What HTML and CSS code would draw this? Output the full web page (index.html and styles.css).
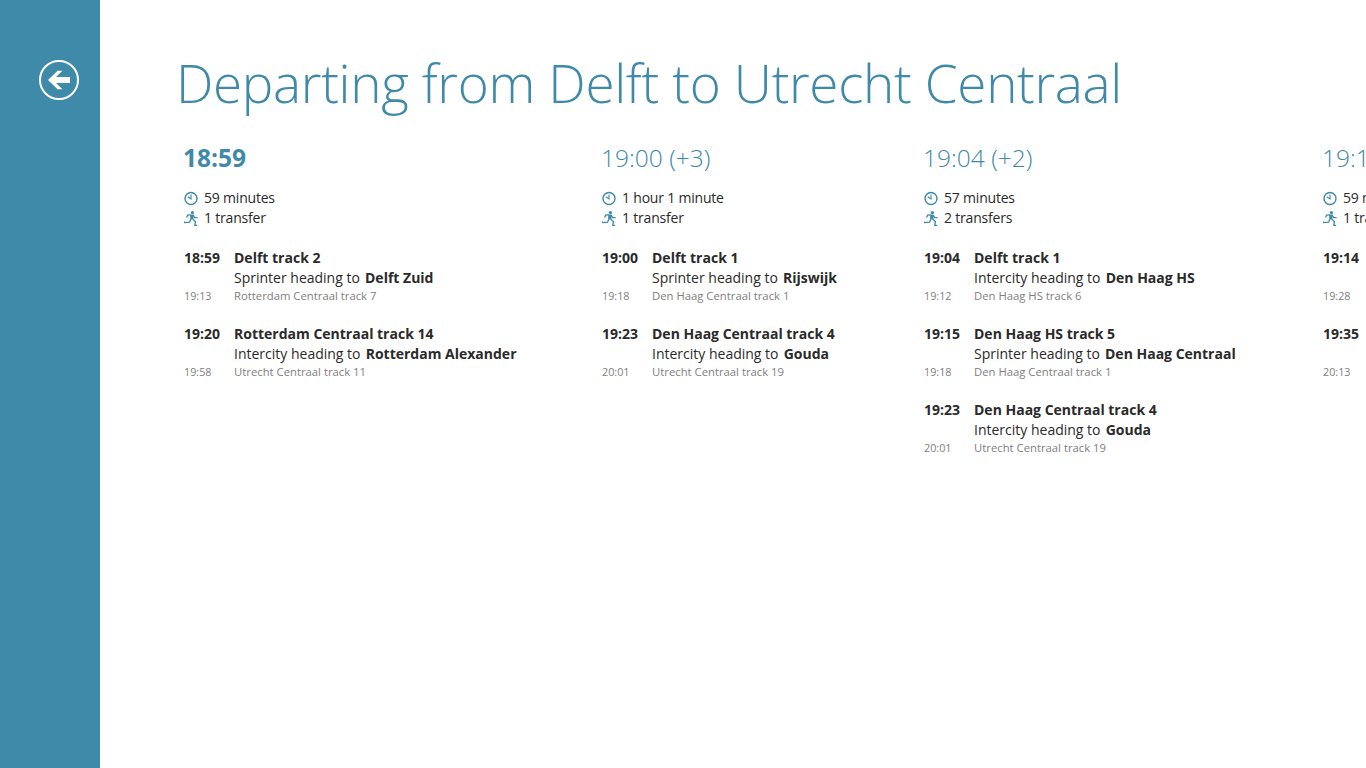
FILE: index.html
```html
<!DOCTYPE html>
<html>
<head>
<meta charset="utf-8">
<title>Departing from Delft to Utrecht Centraal</title>
<link rel="stylesheet" href="styles.css">
</head>
<body>
<svg class="defs" width="0" height="0">
  <symbol id="icon-clock" viewBox="0 0 14 14">
    <circle cx="7" cy="7" r="6" fill="none" stroke="currentColor" stroke-width="1.4"/>
    <path d="M7 3V7.4L3.8 5.2" fill="none" stroke="currentColor" stroke-width="1.1"/>
  </symbol>
  <symbol id="icon-run" viewBox="0 0 14 15">
    <circle cx="8.4" cy="1.6" r="1.6" fill="currentColor"/>
    <path d="M6.2 3.6 9.6 3.6 9.4 8.6 6.2 8.4Z" fill="currentColor"/>
    <path d="M9.2 4 10.6 6.6 13.6 6.6M6.8 3.8 3.6 4.2 2.6 6.6M6.8 8.2 5.6 11.2 .6 11.6 .2 10.4M8.8 8.2 11.4 10.4 10.8 14.4 13.2 14.4" fill="none" stroke="currentColor" stroke-width="1.3"/>
  </symbol>
</svg>
<div class="page">
  <aside class="rail">
    <a class="back" href="#">
      <svg viewBox="0 0 40 40" width="40" height="40">
        <circle cx="20" cy="20" r="19" fill="none" stroke="#fff" stroke-width="2"/>
        <path d="M9 20 18.5 10.8H23.5L17 17H31V23H17L23.5 29.2H18.5Z" fill="#fff"/>
      </svg>
    </a>
  </aside>
  <main class="content">
    <h1 class="title">Departing from Delft to Utrecht Centraal</h1>
    <div class="options">

      <section class="option first">
        <h2 class="depart">18:59</h2>
        <ul class="facts">
          <li><svg class="icon"><use href="#icon-clock"/></svg>59 minutes</li>
          <li><svg class="icon"><use href="#icon-run"/></svg>1 transfer</li>
        </ul>
        <div class="leg">
          <b class="t">18:59</b><b>Delft track 2</b>
          <span></span><span>Sprinter heading to <b>Delft Zuid</b></span>
          <small>19:13</small><small>Rotterdam Centraal track 7</small>
        </div>
        <div class="leg">
          <b class="t">19:20</b><b>Rotterdam Centraal track 14</b>
          <span></span><span>Intercity heading to <b>Rotterdam Alexander</b></span>
          <small>19:58</small><small>Utrecht Centraal track 11</small>
        </div>
      </section>

      <section class="option second">
        <h2 class="depart">19:00 (+3)</h2>
        <ul class="facts">
          <li><svg class="icon"><use href="#icon-clock"/></svg>1 hour 1 minute</li>
          <li><svg class="icon"><use href="#icon-run"/></svg>1 transfer</li>
        </ul>
        <div class="leg">
          <b class="t">19:00</b><b>Delft track 1</b>
          <span></span><span>Sprinter heading to <b>Rijswijk</b></span>
          <small>19:18</small><small>Den Haag Centraal track 1</small>
        </div>
        <div class="leg">
          <b class="t">19:23</b><b>Den Haag Centraal track 4</b>
          <span></span><span>Intercity heading to <b>Gouda</b></span>
          <small>20:01</small><small>Utrecht Centraal track 19</small>
        </div>
      </section>

      <section class="option third">
        <h2 class="depart">19:04 (+2)</h2>
        <ul class="facts">
          <li><svg class="icon"><use href="#icon-clock"/></svg>57 minutes</li>
          <li><svg class="icon"><use href="#icon-run"/></svg>2 transfers</li>
        </ul>
        <div class="leg">
          <b class="t">19:04</b><b>Delft track 1</b>
          <span></span><span>Intercity heading to <b>Den Haag HS</b></span>
          <small>19:12</small><small>Den Haag HS track 6</small>
        </div>
        <div class="leg">
          <b class="t">19:15</b><b>Den Haag HS track 5</b>
          <span></span><span>Sprinter heading to <b>Den Haag Centraal</b></span>
          <small>19:18</small><small>Den Haag Centraal track 1</small>
        </div>
        <div class="leg">
          <b class="t">19:23</b><b>Den Haag Centraal track 4</b>
          <span></span><span>Intercity heading to <b>Gouda</b></span>
          <small>20:01</small><small>Utrecht Centraal track 19</small>
        </div>
      </section>

      <section class="option fourth">
        <h2 class="depart">19:14</h2>
        <ul class="facts">
          <li><svg class="icon"><use href="#icon-clock"/></svg>59 minutes</li>
          <li><svg class="icon"><use href="#icon-run"/></svg>1 transfer</li>
        </ul>
        <div class="leg">
          <b class="t">19:14</b><b></b>
          <span></span><span>&nbsp;</span>
          <small>19:28</small><small></small>
        </div>
        <div class="leg">
          <b class="t">19:35</b><b></b>
          <span></span><span>&nbsp;</span>
          <small>20:13</small><small></small>
        </div>
      </section>

    </div>
  </main>
</div>
</body>
</html>
```

FILE: styles.css
```css
html, body {margin:0; padding:0; height:100%; overflow:hidden; background:#fff;}
body {font:14px/20px "Open Sans", "Noto Sans", sans-serif; color:#2a2a2a;}
.defs {position:absolute;}

.page {display:flex; height:768px;}
.rail {flex:0 0 100px; background:#3f89a9; box-sizing:border-box; padding:60px 0 0 39px;}
.back {display:block; width:40px; height:40px;}
.back svg {display:block;}

.content {flex:1; min-width:0; padding:48px 0 0 76px; overflow:hidden;}
.title {margin:0; font-size:53px; line-height:70px; letter-spacing:-0.33px; font-weight:300; color:#3f89a9; white-space:nowrap;}

.options {display:grid; grid-template-columns:418px 322px 399px 200px; margin:23px 0 0 7px;}
.depart {margin:0; font-size:24.5px; line-height:34px; font-weight:300; color:#3f89a9; white-space:nowrap;}
.first .depart {font-weight:700;}

.facts {list-style:none; margin:13px 0 0 1px; padding:0; letter-spacing:-0.2px;}
.facts li {display:flex; align-items:center; white-space:nowrap;}
.icon {flex:none; width:14px; height:15px; margin-right:6px; color:#3f89a9;}

.leg {display:grid; grid-template-columns:50px 1fr; margin:20px 0 0 1px; white-space:nowrap;}
.leg b {font-weight:700;}
.leg span b {margin-left:1.5px;}
.leg small {font-size:11.3px; line-height:16px; color:#808080;}
.leg small:nth-child(5) {font-size:10.8px;}
```
